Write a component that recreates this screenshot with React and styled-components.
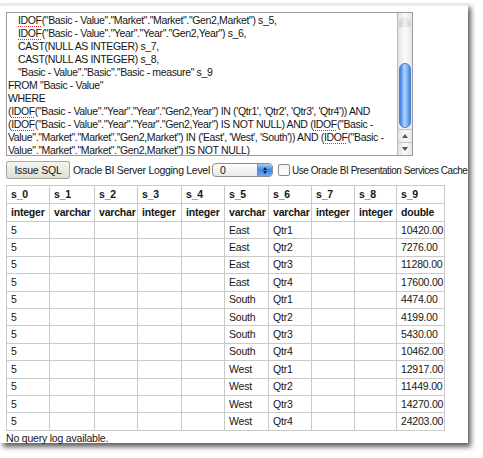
import React from "react"
import styled, { createGlobalStyle } from "styled-components"

const GlobalStyle = createGlobalStyle`
  html, body {
    margin: 0;
    padding: 0;
    background: #fff;
  }
  body {
    font-family: "Liberation Sans", Arial, sans-serif;
    font-size: 10.5px;
    letter-spacing: -0.2px;
    color: #161616;
  }
`

const Page = styled.div`
  width: 483px;
  height: 458px;
  padding-top: 3px;
  box-sizing: border-box;
  overflow: hidden;
`
const Panel = styled.div`
  width: 468px;
  height: 440px;
  box-sizing: border-box;
  background: #fff;
  border-top: 3px solid #e7ebee;
  box-shadow: 3px 4px 5px rgba(0, 0, 0, 0.62);
  padding: 6px 0 0 6px;
  display: flex;
  flex-direction: column;
`
const Editor = styled.div`
  width: 407px;
  height: 144px;
  box-sizing: border-box;
  border: 1px solid #9c9c9c;
  display: flex;
  background: #fff;
`
const EditorText = styled.div`
  flex: 1;
  overflow: hidden;
  padding: 1px 0 0 1px;
  line-height: 13px;
  letter-spacing: -0.36px;
  white-space: pre;
`
const Line = styled.div`
  padding-left: ${(p) => (p.$indent ? "10px" : "0")};
`
const Misspelt = styled.span`
  text-decoration: underline dotted #e0302a;
  text-decoration-thickness: 1px;
  text-underline-offset: 2px;
`
const Scrollbar = styled.div`
  width: 14px;
  flex-shrink: 0;
  border-left: 1px solid #b8b8b8;
  display: flex;
  flex-direction: column;
  background: linear-gradient(to right, #e2e2e2, #fbfbfb 50%, #e6e6e6);
`
const Track = styled.div`
  flex: 1;
  padding: 4px 1px 0;
`
const TrackCap = styled.div`
  height: 10px;
  border-radius: 7px 7px 0 0;
  background: linear-gradient(to right, #c9c9c9, #f2f2f2 50%, #cfcfcf);
`
const Thumb = styled.div`
  margin-top: 36px;
  height: 65px;
  border-radius: 7px;
  border: 1px solid #4f7fc8;
  box-sizing: border-box;
  background: linear-gradient(to right, #3d7ee0, #a9d2ff 45%, #7fb8f5 70%, #3f85e2);
`
const Arrow = styled.div`
  height: 12px;
  border-top: 1px solid #c4c4c4;
  display: flex;
  align-items: center;
  justify-content: center;
  &::after {
    content: "";
    border-left: 3px solid transparent;
    border-right: 3px solid transparent;
    ${(p) =>
      p.$up
        ? "border-bottom: 4px solid #555;"
        : "border-top: 4px solid #555;"}
  }
`
const Controls = styled.div`
  margin-top: 5px;
  height: 18px;
  display: flex;
  align-items: center;
  & > * {
    flex-shrink: 0;
  }
`
const Button = styled.div`
  width: 64px;
  height: 18px;
  box-sizing: border-box;
  border: 1px solid #a6a69a;
  border-radius: 2px;
  background: linear-gradient(#f6f5ee, #e0dfd2);
  display: flex;
  align-items: center;
  justify-content: center;
  white-space: nowrap;
`
const Label = styled.span`
  margin-left: ${(p) => p.$gap || 3}px;
  white-space: nowrap;
  letter-spacing: ${(p) => (p.$tight ? "-0.45px" : "-0.3px")};
  font-size: ${(p) => (p.$tight ? "10px" : "10.5px")};
`
const Select = styled.div`
  margin-left: 2px;
  width: 61px;
  height: 14px;
  box-sizing: border-box;
  border: 1px solid #8e8e8e;
  border-radius: 4px;
  background: linear-gradient(#fdfdfd, #e9e9e9);
  display: flex;
  align-items: center;
  overflow: hidden;
`
const SelectValue = styled.span`
  flex: 1;
  padding-left: 7px;
`
const SelectArrows = styled.div`
  width: 14px;
  height: 100%;
  background: linear-gradient(#a8cdf7, #3f88e6 50%, #6aaaf2);
  border-left: 1px solid #6d8fc0;
  display: flex;
  flex-direction: column;
  align-items: center;
  justify-content: center;
  gap: 1px;
`
const Tri = styled.div`
  border-left: 2.5px solid transparent;
  border-right: 2.5px solid transparent;
  ${(p) =>
    p.$up ? "border-bottom: 3px solid #1a1a1a;" : "border-top: 3px solid #1a1a1a;"}
`
const Checkbox = styled.div`
  margin-left: 5px;
  width: 12px;
  height: 12px;
  box-sizing: border-box;
  border: 1px solid #8a8a8a;
  border-radius: 2px;
  background: linear-gradient(#f2f2f2, #fff);
`
const Table = styled.table`
  margin-top: 6px;
  width: 438px;
  border-collapse: collapse;
  table-layout: fixed;
`
const Cell = styled.td`
  border: 1px solid #cacaca;
  padding: 0 0 0 4px;
  height: ${(p) => (p.$head ? "17px" : "16.4px")};
  font-weight: ${(p) => (p.$head ? "bold" : "normal")};
  white-space: nowrap;
  overflow: hidden;
  line-height: 11px;
`
const Footer = styled.div`
  margin-top: 1px;
  line-height: 13px;
`

const widths = [43, 45, 43, 44, 43, 44, 43, 43, 42, 48]
const names = ["s_0", "s_1", "s_2", "s_3", "s_4", "s_5", "s_6", "s_7", "s_8", "s_9"]
const types = ["integer", "varchar", "varchar", "integer", "integer", "varchar", "varchar", "integer", "integer", "double"]
const rows = [
  ["East", "Qtr1", "10420.00"],
  ["East", "Qtr2", "7276.00"],
  ["East", "Qtr3", "11280.00"],
  ["East", "Qtr4", "17600.00"],
  ["South", "Qtr1", "4474.00"],
  ["South", "Qtr2", "4199.00"],
  ["South", "Qtr3", "5430.00"],
  ["South", "Qtr4", "10462.00"],
  ["West", "Qtr1", "12917.00"],
  ["West", "Qtr2", "11449.00"],
  ["West", "Qtr3", "14270.00"],
  ["West", "Qtr4", "24203.00"],
]

const I = () => <Misspelt>IDOF</Misspelt>

export default function App() {
  return (
    <Page>
      <GlobalStyle />
      <Panel>
        <Editor>
          <EditorText>
            <Line $indent><I />("Basic - Value"."Market"."Market"."Gen2,Market") s_5,</Line>
            <Line $indent><I />("Basic - Value"."Year"."Year"."Gen2,Year") s_6,</Line>
            <Line $indent>CAST(NULL AS INTEGER) s_7,</Line>
            <Line $indent>CAST(NULL AS INTEGER) s_8,</Line>
            <Line $indent>"Basic - Value"."Basic"."Basic - measure" s_9</Line>
            <Line>FROM "Basic - Value"</Line>
            <Line>WHERE</Line>
            <Line>(<I />("Basic - Value"."Year"."Year"."Gen2,Year") IN ('Qtr1', 'Qtr2', 'Qtr3', 'Qtr4')) AND</Line>
            <Line>(<I />("Basic - Value"."Year"."Year"."Gen2,Year") IS NOT NULL) AND (<I />("Basic -</Line>
            <Line>Value"."Market"."Market"."Gen2,Market") IN ('East', 'West', 'South')) AND (<I />("Basic -</Line>
            <Line>Value"."Market"."Market"."Gen2,Market") IS NOT NULL)</Line>
          </EditorText>
          <Scrollbar>
            <Track>
              <TrackCap />
              <Thumb />
            </Track>
            <Arrow $up />
            <Arrow />
          </Scrollbar>
        </Editor>
        <Controls>
          <Button>Issue SQL</Button>
          <Label>Oracle BI Server Logging Level</Label>
          <Select>
            <SelectValue>0</SelectValue>
            <SelectArrows>
              <Tri $up />
              <Tri />
            </SelectArrows>
          </Select>
          <Checkbox />
          <Label $gap={2} $tight>Use Oracle BI Presentation Services Cache</Label>
        </Controls>
        <Table>
          <colgroup>
            {widths.map((w, i) => (
              <col key={i} style={{ width: w }} />
            ))}
          </colgroup>
          <tbody>
            <tr>
              {names.map((n) => (
                <Cell key={n} $head>{n}</Cell>
              ))}
            </tr>
            <tr>
              {types.map((t, i) => (
                <Cell key={i} $head>{t}</Cell>
              ))}
            </tr>
            {rows.map((r, i) => (
              <tr key={i}>
                <Cell>5</Cell>
                <Cell />
                <Cell />
                <Cell />
                <Cell />
                <Cell>{r[0]}</Cell>
                <Cell>{r[1]}</Cell>
                <Cell />
                <Cell />
                <Cell>{r[2]}</Cell>
              </tr>
            ))}
          </tbody>
        </Table>
        <Footer>No query log available.</Footer>
      </Panel>
    </Page>
  )
}
